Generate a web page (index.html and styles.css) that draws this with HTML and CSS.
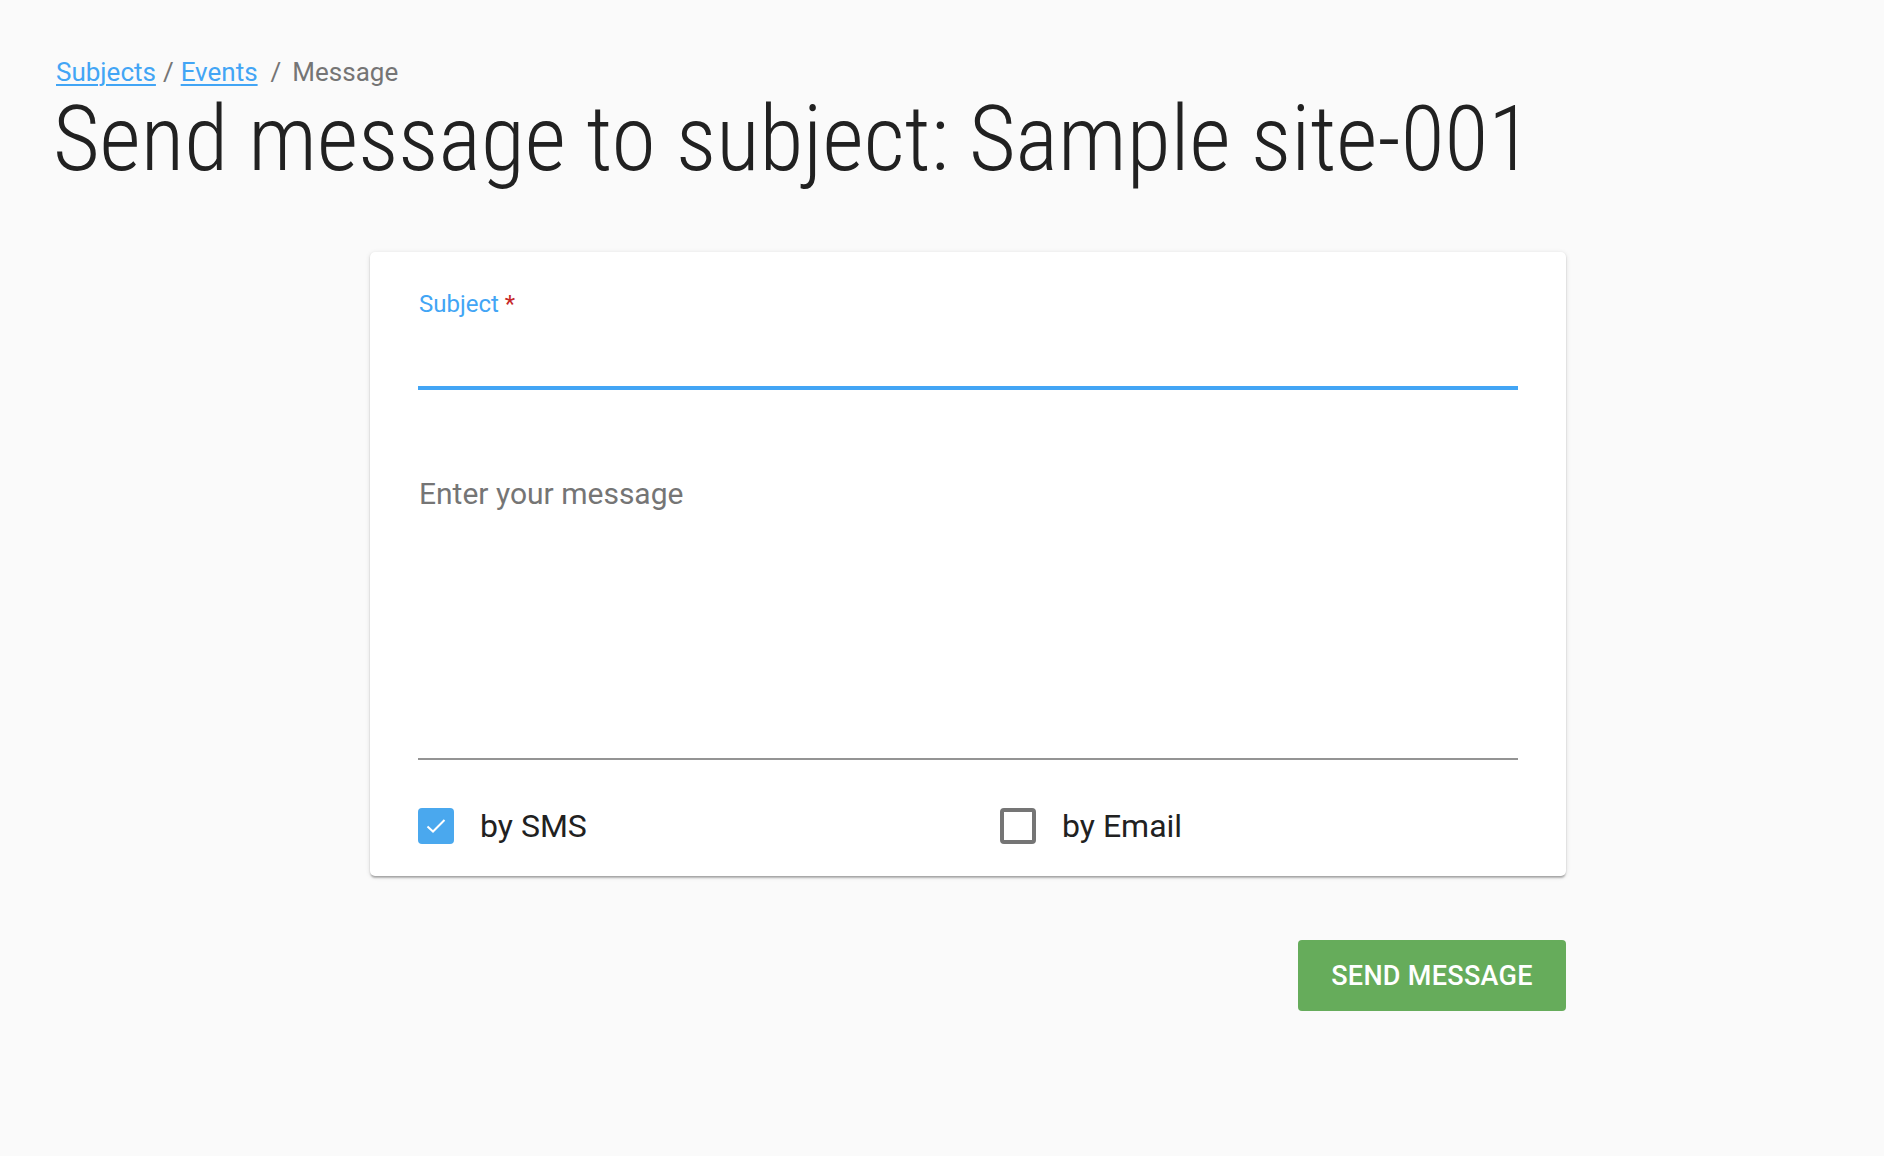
FILE: index.html
```html
<!DOCTYPE html>
<html>
<head>
<meta charset="utf-8">
<link rel="stylesheet" href="styles.css">
</head>
<body>
<main class="page">
  <nav class="crumbs">
    <a href="#" class="crumb-link">Subjects</a><span class="sep sep-tight">/</span><a href="#" class="crumb-link">Events</a><span class="sep">/</span><span class="crumb-current">Message</span>
  </nav>
  <h1 class="title">Send message to subject: Sample site-001</h1>
  <section class="form-wrap">
    <div class="card">
      <label class="field-label">Subject <span class="req">*</span></label>
      <div class="subject-input"></div>
      <div class="message-area"><span class="placeholder">Enter your message</span></div>
      <div class="checks">
        <div class="check-item">
          <span class="box box-on">
            <svg width="22" height="18" viewBox="0 0 22 18"><path d="M2.5 9.5 L8 14.5 L19.5 3" fill="none" stroke="#fff" stroke-width="2"/></svg>
          </span>
          <span class="check-text">by SMS</span>
        </div>
        <div class="check-item">
          <span class="box box-off"></span>
          <span class="check-text">by Email</span>
        </div>
      </div>
    </div>
    <div class="actions">
      <button class="send">SEND MESSAGE</button>
    </div>
  </section>
</main>
</body>
</html>
```
FILE: styles.css
```css
html, body {
  margin: 0;
  padding: 0;
  background: #fafafa;
}
body {
  font-family: Roboto, "Liberation Sans", sans-serif;
  color: #212121;
}
.page {
  padding: 57px 0 0 55px;
}
.crumbs {
  font-size: 26px;
  line-height: 30px;
  height: 29px;
  color: #757575;
  display: flex;
  align-items: baseline;
}
.crumb-link {
  color: #42a5f5;
  text-decoration: underline;
  text-underline-offset: 3px;
  text-decoration-thickness: 2px;
}
.crumbs .crumb-link:first-child {
  margin-left: 1px;
}
.sep {
  margin: 0 11px 0 13px;
}
.sep-tight {
  margin: 0 7px 0 7px;
}
.crumb-current {
  color: #757575;
}
.title {
  margin: 0 0 0 -2px;
  font-size: 90px;
  font-weight: 300;
  font-stretch: 75%;
  line-height: 107px;
  color: #212121;
}
.form-wrap {
  margin: 59px 0 0 315px;
  width: 1196px;
}
.card {
  background: #fff;
  border-radius: 5px;
  box-shadow: 0 3px 2px -1px rgba(0,0,0,.2), 0 1px 2px rgba(0,0,0,.14), 0 1px 5px rgba(0,0,0,.12);
  padding: 38px 48px 32px 48px;
}
.field-label {
  display: block;
  font-size: 24px;
  line-height: 28px;
  color: #42a5f5;
  padding-left: 1px;
}
.req {
  color: #c62828;
}
.subject-input {
  height: 68px;
  border-bottom: 4px solid #42a5f5;
}
.message-area {
  margin-top: 86px;
  height: 282px;
  border-bottom: 2px solid #949494;
}
.placeholder {
  display: block;
  font-size: 30px;
  line-height: 36px;
  color: #757575;
  padding-left: 1px;
}
.checks {
  margin-top: 48px;
  display: grid;
  grid-template-columns: 582px 1fr;
}
.check-item {
  display: flex;
  align-items: center;
  height: 36px;
}
.box {
  width: 36px;
  height: 36px;
  box-sizing: border-box;
  border-radius: 4px;
  display: flex;
  align-items: center;
  justify-content: center;
  margin-right: 26px;
}
.box-on {
  background: #4aa8ee;
}
.box-off {
  border: 4px solid #757575;
  border-radius: 4px;
}
.check-text {
  font-size: 32px;
  line-height: 36px;
  color: #212121;
}
.actions {
  display: flex;
  justify-content: flex-end;
  margin-top: 64px;
}
.send {
  width: 268px;
  height: 71px;
  border: none;
  border-radius: 4px;
  background: #66ac5b;
  color: #fff;
  font-family: Roboto, "Liberation Sans", sans-serif;
  font-weight: 500;
  font-size: 27px;
  padding: 0;
  letter-spacing: 0.3px;
}
```
